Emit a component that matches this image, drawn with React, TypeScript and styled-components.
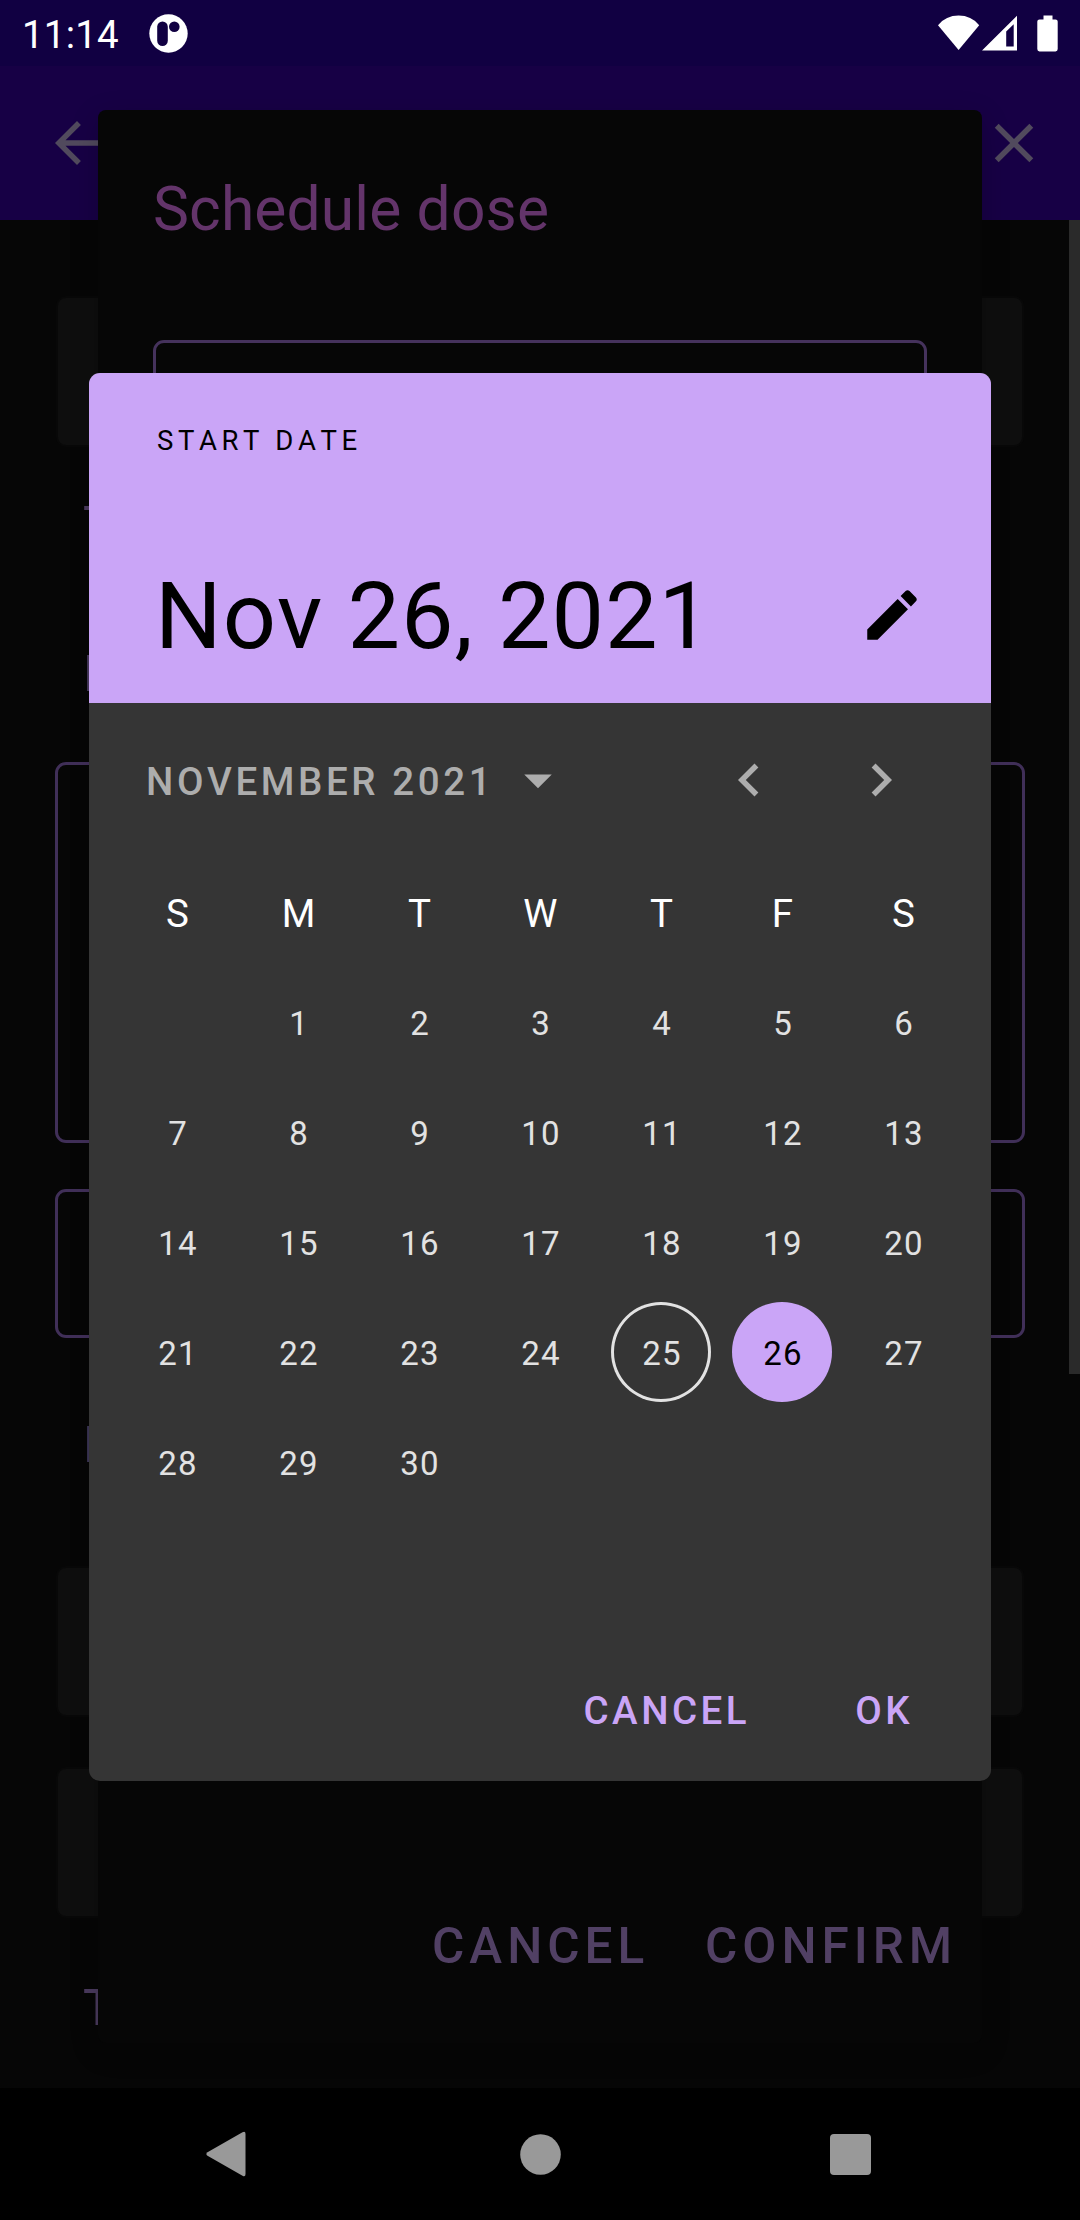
import React from "react";
import styled, { createGlobalStyle } from "styled-components";

const Global = createGlobalStyle`
  * { box-sizing: border-box; }
  html, body { margin: 0; background: #000; }
  body { font-family: Roboto, "Liberation Sans", sans-serif; font-kerning: none; }
  button { font-kerning: none; }
  svg { display: block; flex: none; }
`;

const Phone = styled.div`
  position: relative;
  width: 1080px;
  height: 2220px;
  overflow: hidden;
  display: flex;
  flex-direction: column;
  background: #060606;
`;

const StatusBar = styled.header`
  height: 66px;
  flex: none;
  display: flex;
  align-items: center;
  padding: 0 22px;
  background: #110042;
  color: #fff;
`;

const Clock = styled.span`
  width: 127px;
  font-size: 38.5px;
  line-height: 66px;
  letter-spacing: 0.2px;
  padding-top: 3px;
`;

const StatusIcons = styled.div`
  margin-left: auto;
  display: flex;
  align-items: center;
`;

const AppBar = styled.div`
  height: 154px;
  flex: none;
  display: flex;
  align-items: center;
  justify-content: space-between;
  padding: 0 33px 0 44px;
  background: #170045;
  color: #514a5d;
`;

const Content = styled.main`
  flex: 1;
  min-height: 0;
  display: flex;
  justify-content: space-between;
`;

const Form = styled.div`
  width: 970px;
  margin-left: 55px;
  display: flex;
  flex-direction: column;
  padding-top: 78px;
`;

const Card = styled.div<{ $gap: number }>`
  height: 147px;
  flex: none;
  margin: 0 3px ${(p) => p.$gap}px;
  border-radius: 8px;
  background: #0e0e0e;
  box-shadow: 0 0 0 2px #080808;
`;

const Label = styled.div<{ $gap: number; $tone: string }>`
  height: 58px;
  flex: none;
  line-height: 58px;
  padding: 1px 0 0 28px;
  font-size: 49.5px;
  color: ${(p) => p.$tone};
  margin-bottom: ${(p) => p.$gap}px;
`;

const Outline = styled.div<{ $height: number; $gap: number }>`
  height: ${(p) => p.$height}px;
  flex: none;
  border: 3px solid #402f58;
  border-radius: 11px;
  margin-bottom: ${(p) => p.$gap}px;
`;

const Scrollbar = styled.div`
  width: 11px;
  height: 1154px;
  background: #2a2a2a;
`;

const NavBar = styled.nav`
  height: 132px;
  flex: none;
  display: flex;
  align-items: center;
  justify-content: space-between;
  padding: 0 209px 0 206px;
  background: #000;
`;

const HomeIcon = styled.svg`
  margin-left: 4px;
`;

const DoseDialog = styled.section`
  position: absolute;
  top: 110px;
  left: 98px;
  width: 884px;
  height: 1933px;
  display: flex;
  flex-direction: column;
  padding: 67px 25px 56px 55px;
  border-radius: 8px;
  background: #060606;
  box-shadow: 0 8px 30px -2px rgba(0, 0, 0, 0.22);
`;

const DoseTitle = styled.h1`
  margin: 0 0 97px;
  font-size: 60.5px;
  font-weight: 400;
  line-height: 66px;
  letter-spacing: 0.15px;
  color: #63346a;
`;

const DoseField = styled.div`
  height: 154px;
  margin-right: 30px;
  border: 3px solid #45325c;
  border-radius: 11px;
`;

const DoseActions = styled.div`
  margin-top: auto;
  display: flex;
  justify-content: flex-end;
  gap: 56px;
  padding-bottom: 12px;
`;

const DoseButton = styled.button`
  border: 0;
  padding: 0;
  background: none;
  font: 500 49.5px/58px Roboto, sans-serif;
  font-kerning: none;
  letter-spacing: 4.95px;
  color: #514064;
`;

const Picker = styled.section`
  position: absolute;
  top: 373px;
  left: 89px;
  width: 902px;
  height: 1408px;
  display: flex;
  flex-direction: column;
  border-radius: 11px;
  overflow: hidden;
  background: #353535;
`;

const PickerHeader = styled.header`
  height: 330px;
  flex: none;
  padding: 51px 66px 0 66px;
  background: #caa5f7;
  color: #000;
`;

const Overline = styled.div`
  padding-left: 2px;
  font-size: 27.5px;
  line-height: 34px;
  letter-spacing: 4.58px;
`;

const HeaderRow = styled.div`
  display: flex;
  align-items: center;
  justify-content: space-between;
  margin-top: 102px;
`;

const SelectedDate = styled.div`
  height: 110px;
  padding-top: 1px;
  font-size: 93.5px;
  line-height: 110px;
  letter-spacing: 0.98px;
`;

const MonthRow = styled.div`
  height: 132px;
  flex: none;
  display: flex;
  align-items: center;
  margin-top: 11px;
  padding: 0 44px 0 57px;
  color: #adadad;
`;

const MonthButton = styled.button`
  display: flex;
  align-items: center;
  gap: 15px;
  border: 0;
  padding: 0;
  margin-right: auto;
  background: none;
  color: inherit;
  font: 500 38.5px/46px Roboto, sans-serif;
  font-kerning: none;
  letter-spacing: 3.6px;
`;

const MonthText = styled.span`
  width: 344px;
  padding-top: 3px;
  text-align: left;
  white-space: nowrap;
`;

const IconButton = styled.button`
  width: 132px;
  height: 132px;
  display: grid;
  place-items: center;
  border: 0;
  padding: 0;
  background: none;
  color: inherit;
`;

const Week = styled.div<{ $head?: boolean }>`
  display: grid;
  grid-template-columns: repeat(7, 121px);
  justify-content: center;
  align-items: center;
  justify-items: center;
  height: 110px;
  font-size: ${(p) => (p.$head ? 38.5 : 33)}px;
  color: ${(p) => (p.$head ? "#fff" : "#e2e2e2")};
`;

const Calendar = styled.div`
  flex: none;
  padding-top: 11px;
`;

const Day = styled.span<{ $kind?: "today" | "selected" }>`
  width: 100px;
  height: 100px;
  display: grid;
  place-items: center;
  padding: 2px 0 0 2px;
  border-radius: 50%;
  letter-spacing: 1.1px;
  box-shadow: ${(p) => (p.$kind === "today" ? "inset 0 0 0 3px #e2e2e2" : "none")};
  background: ${(p) => (p.$kind === "selected" ? "#caa5f7" : "transparent")};
  color: ${(p) => (p.$kind === "selected" ? "#000" : "inherit")};
`;

const PickerActions = styled.footer`
  margin-top: auto;
  display: flex;
  justify-content: flex-end;
  gap: 105px;
  padding: 0 78px 47px 0;
`;

const PickerButton = styled.button`
  border: 0;
  padding: 0;
  background: none;
  font: 500 38.5px/46px Roboto, sans-serif;
  font-kerning: none;
  letter-spacing: 3.5px;
  color: #caa5f7;
`;

const Icon = ({ d }: { d: string }) => (
  <svg width="66" height="66" viewBox="0 0 24 24" fill="currentColor">
    <path d={d} />
  </svg>
);

const paths = {
  back: "M20 11H7.83l5.59-5.59L12 4l-8 8 8 8 1.41-1.41L7.83 13H20v-2z",
  close:
    "M19 6.41L17.59 5 12 10.59 6.41 5 5 6.41 10.59 12 5 17.59 6.41 19 12 13.41 17.59 19 19 17.59 13.41 12z",
  edit: "M3 17.25V21h3.75L17.81 9.94l-3.75-3.75L3 17.25zM20.71 7.04c.39-.39.39-1.02 0-1.41l-2.34-2.34c-.39-.39-1.02-.39-1.41 0l-1.83 1.83 3.75 3.75 1.83-1.83z",
  drop: "M7 10l5 5 5-5z",
  left: "M15.41 7.41L14 6l-6 6 6 6 1.41-1.41L10.83 12z",
  right: "M10 6L8.59 7.41 13.17 12l-4.58 4.59L10 18l6-6z",
};

const weeks: (number | null)[][] = Array.from({ length: 5 }, (_, w) =>
  Array.from({ length: 7 }, (_, d) => {
    const n = w * 7 + d;
    return n >= 1 && n <= 30 ? n : null;
  })
);

const kindOf = (n: number | null) =>
  n === 25 ? "today" : n === 26 ? "selected" : undefined;

export default function App() {
  return (
    <Phone>
      <Global />
      <StatusBar>
        <Clock>11:14</Clock>
        <svg width="39" height="39" viewBox="0 0 39 39">
          <circle cx="19.5" cy="19.5" r="19.2" fill="#fff" />
          <rect x="8.2" y="7.5" width="10.6" height="24.5" rx="5.3" fill="#110042" />
          <circle cx="25.3" cy="12.8" r="5.3" fill="#110042" />
        </svg>
        <StatusIcons>
          <svg width="120" height="37" viewBox="0 0 120 37" fill="#fff">
            <path d="M0 10.2Q8 .6 20.6.6T41.2 10.2L20.6 35z" />
            <path
              fillRule="evenodd"
              d="M44 35.4L79 .8V35.4zM68.200 16.500V31.600H75.700V9.200z"
            />
            <path d="M105.5.4h9v4h3q2.2 0 2.2 2.2V34q0 2.400-2.200 2.400H101.500q-2.200 0-2.200-2.400V6.600q0-2.200 2.200-2.200h4z" />
          </svg>
        </StatusIcons>
      </StatusBar>
      <AppBar>
        <Icon d={paths.back} />
        <Icon d={paths.close} />
      </AppBar>
      <Content>
        <Form>
          <Card $gap={50} />
          <Label $gap={91} $tone="#4a3a5e">T</Label>
          <Label $gap={60} $tone="#483a5e">D</Label>
          <Outline $height={381} $gap={46} />
          <Outline $height={149} $gap={77} />
          <Label $gap={95} $tone="#3a3454">E</Label>
          <Card $gap={54} />
          <Card $gap={62} />
          <Label $gap={0} $tone="#4a3a5e">T</Label>
        </Form>
        <Scrollbar />
      </Content>
      <NavBar>
        <svg width="40" height="46" viewBox="0 0 40 46" fill="#999">
          <path d="M36.500 1.200Q39.500-.4 39.500 3V43Q39.500 46.400 36.500 44.800L1.500 24.800Q-.8 23 1.500 21.200z" />
        </svg>
        <HomeIcon width="41" height="41" viewBox="0 0 41 41" fill="#999">
          <circle cx="20.500" cy="20.500" r="20.300" />
        </HomeIcon>
        <svg width="41" height="41" viewBox="0 0 41 41" fill="#999">
          <rect width="41" height="41" rx="4" />
        </svg>
      </NavBar>

      <DoseDialog>
        <DoseTitle>Schedule dose</DoseTitle>
        <DoseField />
        <DoseActions>
          <DoseButton>CANCEL</DoseButton>
          <DoseButton>CONFIRM</DoseButton>
        </DoseActions>
      </DoseDialog>

      <Picker>
        <PickerHeader>
          <Overline>START DATE</Overline>
          <HeaderRow>
            <SelectedDate>Nov 26, 2021</SelectedDate>
            <Icon d={paths.edit} />
          </HeaderRow>
        </PickerHeader>
        <MonthRow>
          <MonthButton>
            <MonthText>NOVEMBER 2021</MonthText>
            <Icon d={paths.drop} />
          </MonthButton>
          <IconButton>
            <Icon d={paths.left} />
          </IconButton>
          <IconButton>
            <Icon d={paths.right} />
          </IconButton>
        </MonthRow>
        <Calendar>
          <Week $head>
            {["S", "M", "T", "W", "T", "F", "S"].map((d, i) => (
              <Day key={i}>{d}</Day>
            ))}
          </Week>
          {weeks.map((week, w) => (
            <Week key={w}>
              {week.map((n, i) => (
                <Day key={i} $kind={kindOf(n)}>
                  {n}
                </Day>
              ))}
            </Week>
          ))}
        </Calendar>
        <PickerActions>
          <PickerButton>CANCEL</PickerButton>
          <PickerButton>OK</PickerButton>
        </PickerActions>
      </Picker>
    </Phone>
  );
}
